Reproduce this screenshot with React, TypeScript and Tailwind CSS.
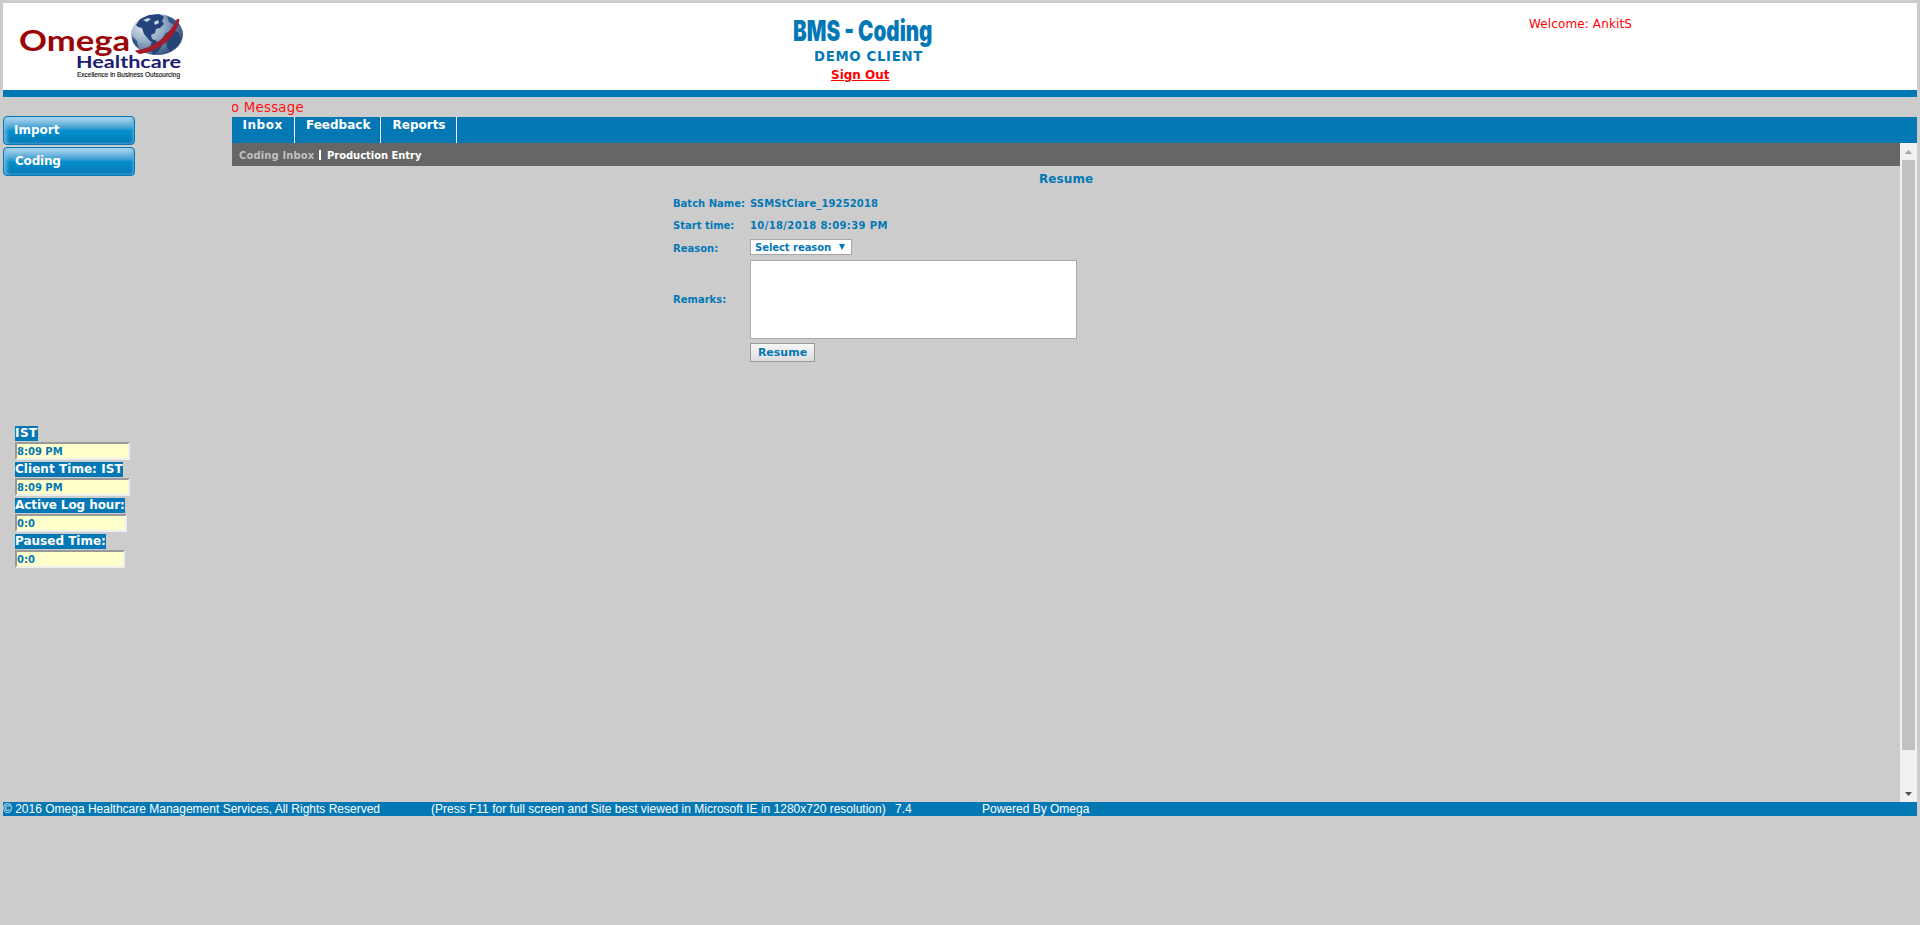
const verdana = "font-['DejaVu_Sans',sans-serif]";

function Logo() {
  return (
    <svg className="mt-[9px] ml-4 h-[70px] w-[170px]" viewBox="0 0 170 70">
      <defs>
        <radialGradient id="globe" cx="25%" cy="30%" r="85%">
          <stop offset="0" stopColor="#dfe8ef" />
          <stop offset="0.45" stopColor="#93acc6" />
          <stop offset="1" stopColor="#294576" />
        </radialGradient>
        <clipPath id="disc"><ellipse cx="138" cy="22.5" rx="26" ry="20.5" /></clipPath>
      </defs>
      <ellipse cx="138" cy="22.5" rx="26" ry="20.5" fill="url(#globe)" />
      <g clipPath="url(#disc)">
        <path d="M117 13l4-6 9-4 10-1 5 3-2 4 2 3-4 4-4 1-1 4-4 2 1 4 5 2-2 2-5-2-6-7-2-6-4-1z" fill="#25437b" />
        <path d="M147 21l6-3 6 2 3 6-2 6-6 5-3 3-3-5-1-6-3-4zM133 28l6 2 4 4-4 6-5 3-3-7z" fill="#264577" />
        <path d="M148 4l7 3 6 7-6-1-5-3zM113 24l5 5 2 8-6-5z" fill="#35558a" />
        <path d="M124 8l5-2 3 1-4 3zM135 10l4-2 1 3-4 2z" fill="#c8d6e2" />
      </g>
      <path d="M116 38.500C131 37 148 27 158 7L160.500 7C158 25 141 39 121 42C119 41.500 117 40 116 38.500z" fill="#a11c2c" />
      <text x="0" y="39" fontFamily="Lato, sans-serif" fontWeight="700" fontSize="28.500" fill="#9c0508" textLength="111" lengthAdjust="spacingAndGlyphs">Omega</text>
      <text x="57" y="56" fontFamily="Lato, sans-serif" fontWeight="700" fontSize="17.500" fill="#1b1c72" textLength="105" lengthAdjust="spacingAndGlyphs">Healthcare</text>
      <text x="58" y="64.500" fontFamily="Liberation Sans, sans-serif" fontSize="6.400" fill="#111" stroke="#111" strokeWidth=".15" textLength="103" lengthAdjust="spacingAndGlyphs">Excellence in Business Outsourcing</text>
    </svg>
  );
}

function Clock({ label, value, box, text }: { label: string; value: string; box: string; text: string }) {
  return (
    <div className="h-9">
      <div className="h-4">
        <span className={`block h-[15px] bg-[#0478b5] text-[12px] leading-[15px] font-bold whitespace-nowrap text-white ${text}`}>
          {label}
        </span>
      </div>
      <div className={`h-[18px] border-2 border-t-[#999] border-r-[#eee] border-b-[#eee] border-l-[#999] bg-[#ffc] text-[10px] leading-[15px] font-bold text-[#0478b5] ${box}`}>
        {value}
      </div>
    </div>
  );
}

const sideButton =
  "flex h-[29px] w-[132px] rounded-[4px] border border-[#0478b5] bg-linear-to-b from-[#b4dcee] via-[#0590cc] via-50% to-[#0478b5] text-left text-[12px] leading-[26px] font-bold text-white shadow-[inset_3px_0_4px_-1px_#7fc4e6,inset_-2px_0_3px_-1px_#58b3dd]";

export default function App() {
  return (
    <div className={`h-[925px] overflow-hidden bg-[#ccc] p-[3px] ${verdana}`}>
      <header className="flex h-[94px] border-b-[7px] border-[#0478b5] bg-white">
        <div className="w-[790px]"><Logo /></div>
        <div className="w-[736px] pt-[11px] text-[#0478b5]">
          <h1 className="h-[34px] origin-left scale-x-[.735] font-['Inter',sans-serif] text-[28px] leading-[34px] font-black whitespace-nowrap">BMS - Coding</h1>
          <div className="ml-[21px] h-[17px] text-[13.3px] leading-[17px] font-bold tracking-[.65px]">DEMO CLIENT</div>
          <a className="mt-0.5 ml-[38px] block h-4 text-[12px] leading-4 font-bold text-[#f00] underline">Sign Out</a>
        </div>
        <div className="pt-[13px] text-[12px] leading-4 tracking-[.12px] text-[#f00]">Welcome: AnkitS</div>
      </header>
      <div className="flex h-[705px]">
        <aside className="w-[229px] pt-[19px]">
          <button className={sideButton}><span className="pl-[10px]">Import</span></button>
          <button className={`mt-0.5 ${sideButton}`}><span className="pl-[11px] tracking-[-.2px]">Coding</span></button>
          <div className="mt-[250px] ml-3">
            <Clock label="IST" value="8:09 PM" box="w-[115px]" text="w-[23px] tracking-[.5px]" />
            <Clock label="Client Time: IST" value="8:09 PM" box="w-[115px]" text="w-[108px] tracking-[.05px]" />
            <Clock label="Active Log hour:" value="0:0" box="w-[112px]" text="w-[110px] tracking-[-.08px]" />
            <Clock label="Paused Time:" value="0:0" box="w-[110px]" text="w-[91px]" />
          </div>
        </aside>
        <main className="min-w-0 flex-1">
          <div className="flex h-5 overflow-hidden text-[13.3px] leading-[21px] tracking-[.25px] text-[#ff1111]"><span className="-ml-px">o Message</span></div>
          <nav className="flex h-[26px] bg-[#0478b5] text-[12px] leading-4 font-bold text-white">
            <div className="w-[63px] border-r border-white pl-[10.5px] tracking-[.55px]">Inbox</div>
            <div className="w-[86px] border-r border-white pl-[11px]">Feedback</div>
            <div className="w-[76px] border-r border-white pl-[11.5px]">Reports</div>
          </nav>
          <div className="flex h-[659px]">
            <section className="flex-1 text-[#0478b5]">
              <div className="flex h-[23px] bg-[#666] pl-[7px] text-[10px] leading-[25px] font-bold text-white">
                <span className="w-[80px] tracking-[.12px] text-[#c0c0c0]">Coding Inbox</span>
                <i className="mt-[7px] mr-[6px] h-[10px] w-[2px] bg-white" />
                <span className="tracking-[-.05px]">Production Entry</span>
              </div>
              <h2 className="mt-[5px] ml-[807px] h-4 text-[12px] leading-[17px] font-bold tracking-[.1px]">Resume</h2>
              <div className="mt-[9px] ml-[441px] grid grid-cols-[77px_1fr] text-[10px] font-bold">
                <span className="h-[22px] leading-4">Batch Name:</span>
                <span className="leading-4 tracking-[.12px]">SSMStClare_19252018</span>
                <span className="h-[21px] leading-4">Start time:</span>
                <span className="leading-4 tracking-[.37px]">10/18/2018 8:09:39 PM</span>
                <span className="h-[21px] leading-[19px]">Reason:</span>
                <div className="flex h-4 w-[102px] border border-[#a6a6a6] bg-white pl-1 leading-[15px]">
                  <span className="w-[84px] tracking-[-.05px]">Select reason</span>
                  <svg className="mt-1 h-[6px] w-[6px]" viewBox="0 0 6 6"><path d="M0 0h6L3 6z" fill="currentColor" /></svg>
                </div>
                <span className="leading-[79px]">Remarks:</span>
                <textarea className="block h-[79px] w-[327px] resize-none border border-[#a9a9a9] bg-white" />
                <div />
                <button className="mt-1 h-[19px] w-[65px] border border-[#999] bg-linear-to-b from-[#f6f6f6] to-[#ddd] text-[11px] leading-[17px]">Resume</button>
              </div>
            </section>
            <div className="flex w-[17px] flex-col items-center bg-[#f1f1f1]">
              <svg className="mt-[7px] h-1 w-[7px]" viewBox="0 0 7 4"><path d="M0 4h7L3.500 0z" fill="#a3a3a3" /></svg>
              <div className="mt-[6px] h-[590px] w-[13px] bg-[#c1c1c1]" />
              <svg className="mt-auto mb-[6px] h-1 w-[7px]" viewBox="0 0 7 4"><path d="M0 0h7L3.500 4z" fill="#505050" /></svg>
            </div>
          </div>
        </main>
      </div>
      <footer className="flex h-[14px] bg-[#0478b5] font-['Liberation_Sans',Arial,sans-serif] text-[12px] leading-[14px] whitespace-pre text-white">
        <span className="w-[428px]">© 2016 Omega Healthcare Management Services, All Rights Reserved</span>
        <span className="w-[464px]">(Press F11 for full screen and Site best viewed in Microsoft IE in 1280x720 resolution)</span>
        <span className="w-[87px]">7.4</span>
        <span>Powered By Omega</span>
      </footer>
    </div>
  );
}
